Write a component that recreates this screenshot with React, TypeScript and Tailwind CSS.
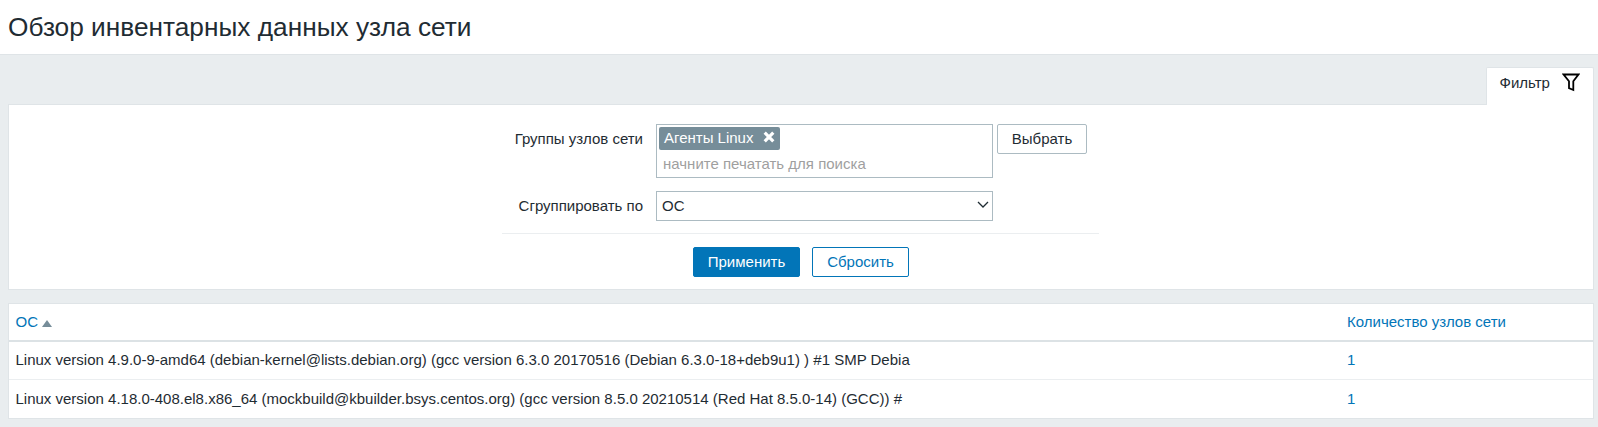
import React from "react";

const rows = [
  {
    os: "Linux version 4.9.0-9-amd64 (debian-kernel@lists.debian.org) (gcc version 6.3.0 20170516 (Debian 6.3.0-18+deb9u1) ) #1 SMP Debia",
    count: 1,
  },
  {
    os: "Linux version 4.18.0-408.el8.x86_64 (mockbuild@kbuilder.bsys.centos.org) (gcc version 8.5.0 20210514 (Red Hat 8.5.0-14) (GCC)) #",
    count: 1,
  },
];

function FilterForm() {
  return (
    <div className="ml-[493px] flex w-[597px] flex-col">
      <div className="flex items-start">
        <label className="w-[141px] shrink-0 text-right leading-[30px]">Группы узлов сети</label>
        <div className="ml-[13px] h-[54px] w-[337px] border border-[#acbbc2] pt-[2px] pl-[2px]">
          <div className="flex h-[23px] w-[121px] items-center justify-between rounded-[2px] bg-[#768d99] pr-[5px] pl-[5px] text-white">
            <span className="-mt-px leading-[22px]">Агенты Linux</span>
            <svg width="12" height="12" viewBox="0 0 12 12" className="-mt-[3px]">
              <path d="M1.7 1.7L10.3 10.3M10.3 1.7L1.7 10.3" stroke="#fff" strokeWidth="3.2" fill="none" />
            </svg>
          </div>
          <div className="pl-1 leading-[28px] text-[#9f9f9f]">начните печатать для поиска</div>
        </div>
        <button className="ml-1 h-[30px] w-[90px] rounded-[2px] border border-[#acbbc2] leading-[28px]">Выбрать</button>
      </div>
      <div className="mt-[13px] flex items-start">
        <label className="w-[141px] shrink-0 text-right leading-[30px]">Сгруппировать по</label>
        <div className="ml-[13px] flex h-[30px] w-[337px] items-center justify-between border border-[#acbbc2] pr-[3px] pl-[5px]">
          <span className="leading-[28px]">ОС</span>
          <svg width="12" height="8" viewBox="0 0 12 8" className="-mt-[2px]">
            <path d="M1 1L6 6L11 1" stroke="#1f2c33" strokeWidth="1.3" fill="none" />
          </svg>
        </div>
      </div>
      <div className="mt-3 flex h-[44px] items-end gap-3 border-t border-[#ebeef0] pl-[191px]">
        <button className="h-[30px] w-[107px] rounded-[2px] border border-[#0275b8] bg-[#0275b8] leading-[28px] text-white">Применить</button>
        <button className="h-[30px] w-[97px] rounded-[2px] border border-[#0275b8] leading-[28px] text-[#0275b8]">Сбросить</button>
      </div>
    </div>
  );
}

export default function App() {
  return (
    <div className="h-[427px] w-[1598px] overflow-hidden bg-[#e9edef] font-['Liberation_Sans',Arial,sans-serif] text-[15px] text-[#1f2c33]">
      <header className="h-[55px] border-b border-[#dfe4e7] bg-white pl-2">
        <h1 className="text-[26.25px] leading-[54px]">Обзор инвентарных данных узла сети</h1>
      </header>
      <main className="flex flex-col pt-3 pr-1 pl-2">
        <div className="relative z-10 -mb-px flex h-[38px] w-[108px] items-center self-end rounded-t-[2px] border border-b-0 border-[#dfe4e7] bg-white pl-[12.5px]">
          <span className="-mt-[7px] leading-[30px]">Фильтр</span>
          <svg width="18" height="19" viewBox="0 0 18 19" className="-mt-[8px] ml-[12.5px]">
            <path d="M1.6 1.5H16.4L11.3 8.2V17L7 15.2V8.2Z" stroke="#000" strokeWidth="1.8" fill="none" />
          </svg>
        </div>
        <section className="h-[186px] border border-[#dfe4e7] bg-white pt-[19px]">
          <FilterForm />
        </section>
        <table className="mt-[13px] w-full border-separate border-spacing-0 border border-[#dfe4e7] bg-white text-left">
          <thead>
            <tr>
              <th className="h-[38px] border-b-2 border-[#dce2e5] p-0 pl-[6.5px] font-normal text-[#0275b8]">
                <span className="flex items-center">
                  ОС
                  <svg width="10" height="7" viewBox="0 0 10 7" className="mt-[3px] ml-1">
                    <path d="M5 0L10 7H0Z" fill="#768d99" />
                  </svg>
                </span>
              </th>
              <th className="w-[253px] border-b-2 border-[#dce2e5] p-0 pl-[7px] font-normal text-[#0275b8]">Количество узлов сети</th>
            </tr>
          </thead>
          <tbody>
            {rows.map((row, i) => (
              <tr key={i} className="group">
                <td className="h-[38px] border-b border-[#ebeef0] p-0 pl-[6.5px] group-last:border-b-0">{row.os}</td>
                <td className="border-b border-[#ebeef0] p-0 pl-[7px] text-[#0275b8] group-last:border-b-0">{row.count}</td>
              </tr>
            ))}
          </tbody>
        </table>
      </main>
    </div>
  );
}
